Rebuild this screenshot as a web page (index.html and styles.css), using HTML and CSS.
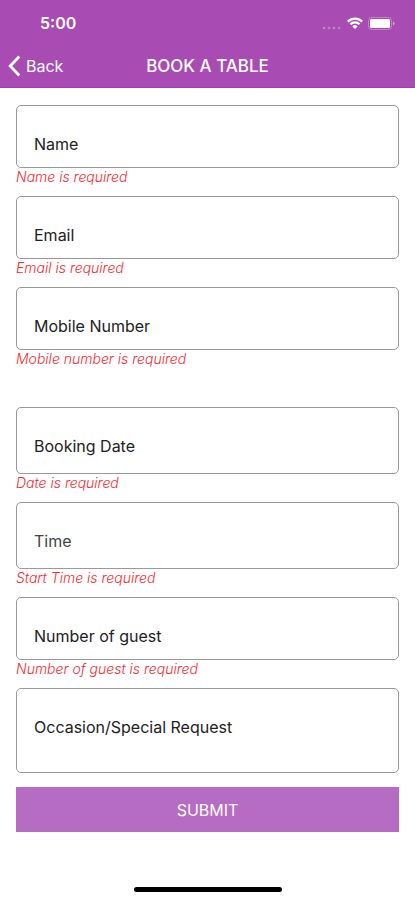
FILE: index.html
```html
<!DOCTYPE html>
<html lang="en">
<head>
<meta charset="utf-8">
<meta name="viewport" content="width=device-width, initial-scale=1">
<title>Book a Table</title>
<link rel="stylesheet" href="styles.css">
</head>
<body>
<header class="header">
  <div class="status">
    <span class="clock">5:00</span>
    <div class="indicators">
      <svg class="signal" viewBox="0 0 20 4" aria-hidden="true"><g fill="#fff" opacity=".3"><circle cx="2" cy="2" r="1.3"/><circle cx="7" cy="2" r="1.3"/><circle cx="12" cy="2" r="1.3"/><circle cx="17" cy="2" r="1.3"/></g></svg>
      <svg class="wifi" viewBox="0 0 16 12" aria-hidden="true"><g fill="none" stroke="#fff" stroke-width="2.2"><path d="M.8 4.6a10.2 10.2 0 0 1 14.4 0"/><path d="M3.4 7.3a6.5 6.5 0 0 1 9.2 0"/></g><path d="M5.4 9.4a3.7 3.7 0 0 1 5.2 0L8 12z" fill="#fff"/></svg>
      <svg class="battery" viewBox="0 0 27 13" aria-hidden="true"><rect x=".5" y=".5" width="23" height="12" rx="3.5" fill="none" stroke="#fff" opacity=".3"/><rect x="2" y="2" width="20" height="9" rx="1.5" fill="#fff"/><path d="M25 4.5q1.5.6 1.5 2t-1.5 2z" fill="#fff" opacity=".5"/></svg>
    </div>
  </div>
  <nav class="navbar">
    <a class="back" href="#">
      <svg class="chevron" viewBox="0 0 13 22" aria-hidden="true"><path d="M11.3 1.5 2.2 11l9.1 9.5" fill="none" stroke="#fff" stroke-width="2.8"/></svg>
      Back
    </a>
    <h1 class="title">BOOK A TABLE</h1>
  </nav>
</header>
<main>
  <form class="form" novalidate>
    <div class="group">
      <div class="field"><label for="name">Name</label><input id="name" type="text" aria-describedby="name-error"></div>
      <p class="error" id="name-error">Name is required</p>
    </div>
    <div class="group">
      <div class="field"><label for="email">Email</label><input id="email" type="email" aria-describedby="email-error"></div>
      <p class="error" id="email-error">Email is required</p>
    </div>
    <div class="group section-end">
      <div class="field"><label for="mobile">Mobile Number</label><input id="mobile" type="tel" aria-describedby="mobile-error"></div>
      <p class="error" id="mobile-error">Mobile number is required</p>
    </div>
    <div class="group">
      <div class="field picker"><label for="date">Booking Date</label><input id="date" type="text" aria-describedby="date-error"></div>
      <p class="error" id="date-error">Date is required</p>
    </div>
    <div class="group">
      <div class="field picker muted"><label for="time">Time</label><input id="time" type="text" aria-describedby="time-error"></div>
      <p class="error" id="time-error">Start Time is required</p>
    </div>
    <div class="group">
      <div class="field"><label for="guests">Number of guest</label><input id="guests" type="text" inputmode="numeric" aria-describedby="guests-error"></div>
      <p class="error" id="guests-error">Number of guest is required</p>
    </div>
    <div class="field request"><label for="request">Occasion/Special Request</label><textarea id="request"></textarea></div>
    <button class="submit" type="submit">SUBMIT</button>
  </form>
</main>
<div class="home-bar"></div>
</body>
</html>
```
FILE: styles.css
```css
* {
  box-sizing: border-box;
}

body {
  margin: 0;
  min-height: 100vh;
  display: flex;
  flex-direction: column;
  background: #fff;
  color: #222;
  font: 16px/20px Inter, "Liberation Sans", sans-serif;
}

.header {
  background: #a84cb3;
  color: #fff;
  border-bottom: 1px solid #9a40a6;
}

.status {
  height: 44px;
  padding: 2px 20px 0 40px;
  display: flex;
  align-items: center;
  justify-content: space-between;
}

.clock {
  font-weight: 600;
}

.indicators {
  display: flex;
  align-items: center;
  gap: 5px;
}

.signal {
  width: 20px;
  height: 4px;
  align-self: flex-end;
}

.wifi {
  width: 16px;
  height: 12px;
}

.battery {
  width: 27px;
  height: 13px;
}

.navbar {
  height: 43px;
  padding: 0 8px;
  display: grid;
  grid-template-columns: 1fr auto 1fr;
  align-items: center;
}

.back {
  display: flex;
  align-items: center;
  gap: 5px;
  color: inherit;
  text-decoration: none;
}

.chevron {
  width: 13px;
  height: 22px;
}

.title {
  margin: 0;
  font-size: 17px;
  font-weight: 500;
}

.form {
  padding: 17px 16px;
  display: flex;
  flex-direction: column;
}

.field {
  display: grid;
  height: 62px;
}

.picker {
  height: 67px;
}

.request {
  height: 85px;
}

.field label,
.field input,
.field textarea {
  grid-area: 1 / 1;
}

.field label {
  z-index: 1;
  padding: 29px 18px 0;
  pointer-events: none;
}

.muted label {
  color: #444;
}

.field input,
.field textarea {
  width: 100%;
  height: 100%;
  padding: 29px 18px 12px;
  border: 1px solid #999;
  border-radius: 5px;
  background: none;
  font: inherit;
  resize: none;
}

.error {
  margin: 0;
  height: 29px;
  padding-top: 1px;
  color: #fa2a30;
  font-size: 14px;
  font-weight: 300;
  line-height: 18px;
  font-style: italic;
}

.picker + .error {
  height: 28px;
  padding-top: 0;
}

.section-end {
  margin-bottom: 29px;
}

.submit {
  margin-top: 14px;
  height: 45px;
  border: 0;
  background: #b76cc3;
  color: #fff;
  font: inherit;
}

.home-bar {
  width: 148px;
  height: 5px;
  margin: auto auto 8px;
  border-radius: 3px;
  background: #000;
}
```
